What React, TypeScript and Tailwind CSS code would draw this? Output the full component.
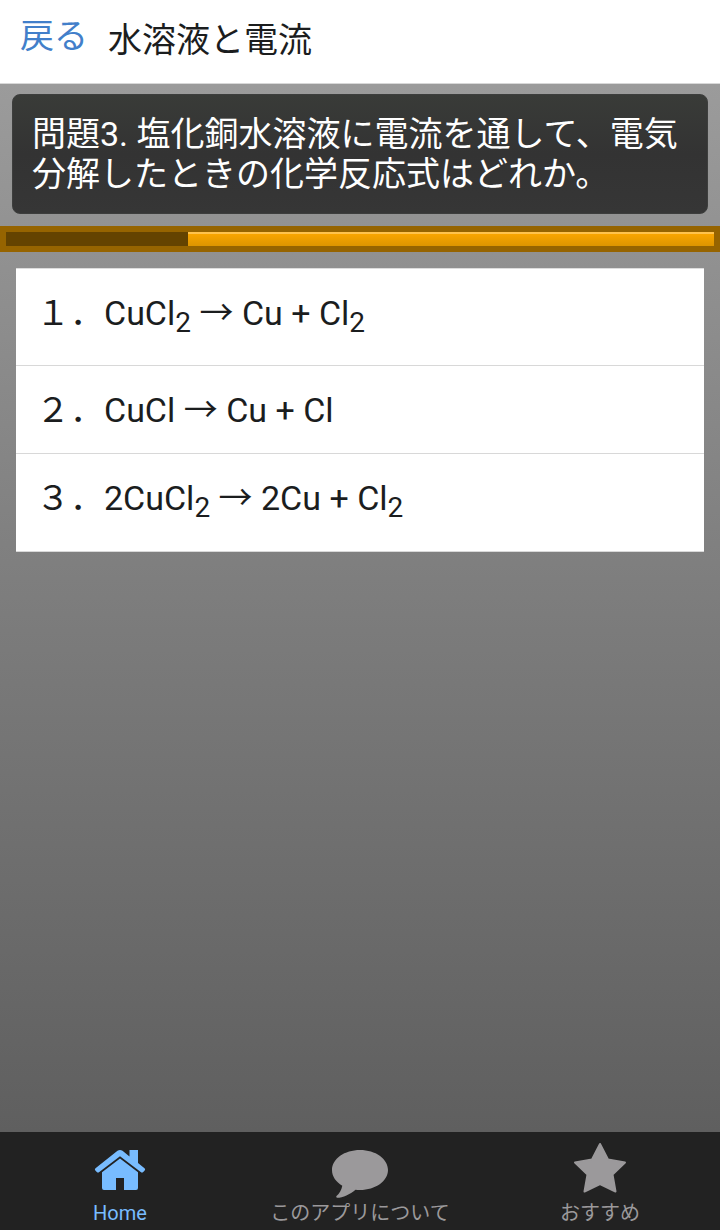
import type { ReactNode } from 'react';

function Sub({ children }: { children: ReactNode }) {
  return <sub className="relative bottom-[-7px] align-baseline text-[28px] leading-none">{children}</sub>;
}

const choices: { label: string; formula: ReactNode; height: string }[] = [
  { label: '１．', formula: <>CuCl<Sub>2</Sub> → Cu + Cl<Sub>2</Sub></>, height: 'h-24' },
  { label: '２．', formula: <>CuCl → Cu + Cl</>, height: 'h-[87px]' },
  { label: '３．', formula: <>2CuCl<Sub>2</Sub> → 2Cu + Cl<Sub>2</Sub></>, height: 'h-[97px]' },
];

function TabIcon({ children }: { children: ReactNode }) {
  return (
    <svg width="56" height="56" viewBox="0 0 56 56" fill="currentColor" stroke="currentColor" strokeLinejoin="round" strokeWidth="0" aria-hidden="true">
      {children}
    </svg>
  );
}

const tabs = [
  {
    name: 'Home',
    color: 'text-[#78bcff]',
    icon: (
      <TabIcon>
        <path d="M25.500 8.800Q28 7 30.500 8.800L37.500 14.500V8H46V21L52.500 26.200Q53.700 27.300 52.700 28.500L51.200 30Q50 31 48.700 30L28 14.200L7.300 30Q6 31 4.800 30L3.300 28.500Q2.300 27.300 3.500 26.200Z" />
        <path d="M28 16.400L46 30.300V46Q46 48 44 48H32V36H24V48H12Q10 48 10 46V30.300Z" />
      </TabIcon>
    ),
  },
  {
    name: 'このアプリについて',
    color: 'text-[#9b999b]',
    icon: (
      <TabIcon>
        <path d="M28 8C43.500 8 56 16.800 56 28S43.500 48 28 48Q25.500 48 23.500 47.700C18 52.500 11 55.600 5 55.800Q3.500 55.300 4.500 54C7.500 51.500 9.500 48 10.300 43.700C4 40 0 34.500 0 28C0 16.800 12.500 8 28 8Z" />
      </TabIcon>
    ),
  },
  {
    name: 'おすすめ',
    color: 'text-[#9b999b]',
    icon: (
      <TabIcon>
        <path strokeWidth="2" d="M28 2L36 17.500L53 20.500L40.500 32.500L43.500 49.500L28 42L12.500 49.500L15.500 32.500L3 20.500L20 17.500Z" />
      </TabIcon>
    ),
  },
];

export default function App() {
  return (
    <div className="flex min-h-screen flex-col bg-[#222] font-[Roboto,'Noto_Sans_CJK_JP',sans-serif] text-[34px] leading-10 text-[#1b1d1e]">
      <header className="flex h-[84px] items-start border-b border-[#d8d8d8] bg-white px-5 pt-4">
        <a href="#back" className="text-[#427fca]">戻る</a>
        <h1 className="ml-5 pt-1">水溶液と電流</h1>
      </header>

      <main className="flex-1 bg-linear-to-b from-[#9b9b9b] to-[#5f5f5f]">
        <div className="px-3 pt-[10px]">
          <h2 className="rounded-lg border border-[#3d3e3d] bg-linear-to-b from-[#393b38] via-[#333] to-[#363636] p-[19px] text-white">
            問題3. 塩化銅水溶液に電流を通して、電気分解したときの化学反応式はどれか。
          </h2>
        </div>

        <div className="mt-3 bg-[#966400] p-[6px]" role="progressbar" aria-label="残り時間" aria-valuemin={0} aria-valuemax={100} aria-valuenow={74}>
          <div className="flex h-[14px] justify-end bg-[#644300]">
            <div className="border-t-2 border-[#ffc34d] bg-linear-to-b from-[#f9a500] to-[#dd9500]" style={{ width: '74.3%' }} />
          </div>
        </div>

        <ol className="mx-4 mt-4 border-t border-[#ddd] bg-white">
          {choices.map((choice) => (
            <li key={choice.label} className="border-b border-[#d8d8d8]">
              <button type="button" className={`flex w-full items-start px-5 pt-6 text-left ${choice.height}`}>
                <span className="w-[68px] shrink-0">{choice.label}</span>
                <span className="whitespace-nowrap">{choice.formula}</span>
              </button>
            </li>
          ))}
        </ol>
      </main>

      <nav className="grid h-[98px] grid-cols-3 bg-[#222]">
        {tabs.map((tab) => (
          <a key={tab.name} href="#tab" className={`flex flex-col items-center gap-[3px] pt-[10px] text-xl leading-6 ${tab.color}`}>
            {tab.icon}
            <span className="whitespace-nowrap">{tab.name}</span>
          </a>
        ))}
      </nav>
    </div>
  );
}
